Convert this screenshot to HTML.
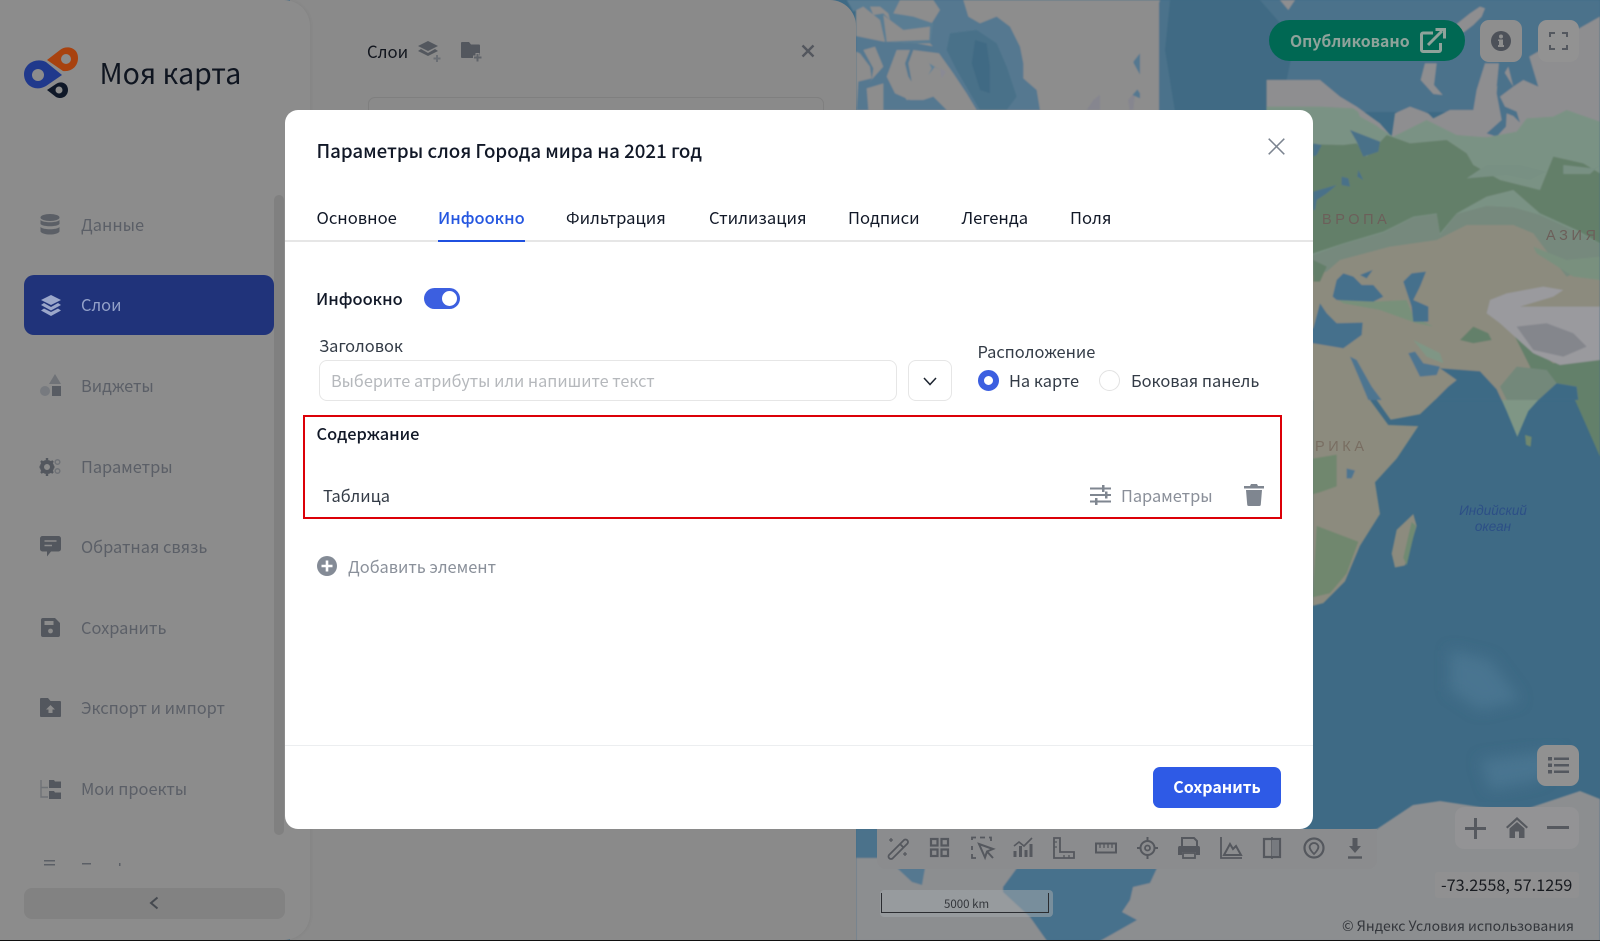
<!DOCTYPE html>
<html lang="ru">
<head>
<meta charset="utf-8">
<title>Моя карта</title>
<style>
html,body{margin:0;padding:0;width:1600px;height:941px;overflow:hidden;background:#3e6a85}
body{position:relative;font-family:"Noto Sans CJK SC","Liberation Sans",sans-serif;color:#0f1520}
.t{position:absolute;white-space:nowrap;line-height:24px;height:24px;font-size:16.4px}
svg{position:absolute;overflow:visible}
#map{left:0;top:0}
#side{position:absolute;left:0;top:0;width:310px;height:940px;background:#8c8c8c;border-radius:0 26px 26px 0;box-shadow:1px 0 3px rgba(0,0,0,.05)}
#layers{position:absolute;left:290px;top:0;width:566px;height:940px;background:#8a8a8a;border-radius:0 26px 0 0}
.nav{color:#5b5f67}
.active{position:absolute;left:24px;top:275px;width:250px;height:60px;background:#20337a;border-radius:10px}
.scroll{position:absolute;left:274px;top:195px;width:10px;height:640px;background:#808080;border-radius:5px}
.collapse{position:absolute;left:24px;top:888px;width:261px;height:31px;background:#828282;border-radius:8px}
.search{position:absolute;left:368px;top:97px;width:456px;height:30px;border:1px solid #7f7f7f;border-radius:7px;box-sizing:border-box}
#modal{position:absolute;left:285px;top:110px;width:1028px;height:719px;background:#fff;border-radius:13px}
.tabline{position:absolute;left:285px;top:240px;width:1028px;height:2px;background:#e6e6e6}
.under{position:absolute;left:438px;top:240px;width:87px;height:2px;background:#1f50e0}
.tab{color:#111827;font-size:16.6px}
.toggle{position:absolute;left:424px;top:288px;width:36px;height:21px;background:#3c5fe0;border-radius:11px}
.toggle i{position:absolute;left:18px;top:3px;width:15px;height:15px;background:#fff;border-radius:50%}
.input{position:absolute;left:319px;top:360px;width:578px;height:41px;border:1px solid #e6e6e6;border-radius:8px;box-sizing:border-box}
.dd{position:absolute;left:908px;top:360px;width:44px;height:41px;border:1px solid #e6e6e6;border-radius:8px;box-sizing:border-box}
.r1{position:absolute;left:977.5px;top:370px;width:21px;height:21px;border-radius:50%;border:6px solid #3c5fe0;box-sizing:border-box;background:#fff}
.r2{position:absolute;left:1099px;top:370px;width:21px;height:21px;border-radius:50%;border:1px solid #e2e2e2;box-sizing:border-box;background:#fff}
.red{position:absolute;left:303px;top:415px;width:979px;height:104px;border:2px solid #dc0008;box-sizing:border-box}
.div{position:absolute;left:285px;top:745px;width:1028px;height:1px;background:#eceef0}
.save{position:absolute;left:1153px;top:767px;width:128px;height:41px;background:#2e5ae6;border-radius:7px;color:#fff;font-size:16px;font-weight:700;text-align:center;line-height:39px}
.pill{position:absolute;left:1269px;top:20px;width:196px;height:41px;background:#006853;border-radius:21px}
.btn{position:absolute;background:#8e8e8e;border-radius:9px}
.bar{position:absolute;left:877px;top:829px;width:500px;height:40px;background:#8b8c8e;border-radius:0 0 9px 9px}
.coords{position:absolute;left:1435px;top:872px;width:144px;height:26px;background:#909091;border-radius:3px}
.scale{position:absolute;left:880px;top:890px;width:173px;height:27px;background:rgba(160,165,170,.55);border-radius:4px}
.scale i{position:absolute;left:1px;top:3px;width:168px;height:20px;border:1px solid #2a2c30;border-top:0;box-sizing:border-box;border-width:0 1.5px 1.5px 1.5px}
</style>
</head>
<body>

<svg id="map" width="1600" height="941" viewBox="0 0 1600 941">
  <defs>
    <filter id="soft" x="-2%" y="-2%" width="104%" height="104%"><feGaussianBlur stdDeviation=".8"/></filter>
    <filter id="wide" x="-30%" y="-30%" width="160%" height="160%"><feGaussianBlur stdDeviation="7"/></filter>
  </defs>
  <rect width="1600" height="941" fill="#3e6a85"/>
  <g filter="url(#soft)">
  <!-- Top strip left: Canadian arctic and Greenland -->
  <rect x="856" y="0" width="320" height="112" fill="#8d8d8d"/>
  <g transform="translate(840,0) scale(.3333)">
    <path d="M280 0H370L385 50 420 70 470 50 510 80 540 140 550 190 550 235 590 270 600 330H410L380 280 340 220 290 150 270 130 275 70 300 30Z" fill="#547890"/>
    <path d="M330 100 410 90 470 130 500 200 530 290 500 330H420L385 270 350 210 320 150Z" fill="#4a7189"/>
    <path d="M405 120 440 130 450 200 450 280 420 270 395 190Z" fill="#3f6a84"/>
    <path d="M20 0H180L160 40 220 50 280 70 272 130 230 130 135 125 120 60 70 20 40 35Z" fill="#5a7d93"/>
    <path d="M90 20 120 20 145 40 150 60 130 40 100 45ZM85 95 110 85 118 120 85 115ZM130 45 190 90 270 80 268 120 140 125Z" fill="#8d8d8d"/>
    <path d="M48 108 130 125 230 130 285 140 300 160 220 150 205 190 215 245 205 230 195 190 210 150 170 150 140 230 165 280 210 300 250 300 280 290 320 330H50L55 245 95 235 90 200 60 160 48 155Z" fill="#547890"/>
    <path d="M85 250 130 200 105 140 70 150 100 205 95 240ZM80 265 130 250 130 330 85 330ZM170 250 200 300 240 295 150 240Z" fill="#8d8d8d"/>
    <path d="M258 170 275 205 265 225 285 200 300 210 268 190Z" fill="#5f8298"/>
    <path d="M300 205 318 215 305 235Z" fill="#8a8a94"/>
    <path d="M860 45 885 50 880 120 840 150 830 190 800 220 790 240 810 260 760 300 740 330H880L900 140 885 100Z" fill="#86868f"/>
    <path d="M885 165 900 160 900 225 880 190ZM845 270 880 250 900 280 900 295Z" fill="#547890"/>
  </g>
  <!-- Greenland east + arctic ocean -->
  <rect x="1159" y="0" width="441" height="112" fill="#4c728b"/>
  <path d="M1140 0H1160L1152 25 1154 36 1133 62 1144 82 1128 100 1130 112H1100V0Z" fill="#8d8d8d"/>
  <path d="M1170 0H1260L1295 40 1280 112H1175L1165 50Z" fill="#3f6a84"/>
  <!-- Novaya Zemlya (zoom 12) -->
  <g transform="translate(1260,0) scale(.3333)" fill="#8e8e90">
    <path d="M590 72 630 40 660 20 675 25 665 50 640 75 610 98 585 95Z"/>
    <path d="M495 190H530L522 255 548 285 520 282 482 240Z"/>
    <path d="M60 0H105L85 30Z"/>
  </g>
  <!-- Eurasia (zoom 10 coords) -->
  <g transform="translate(1300,100) scale(.3333)">
    <path d="M-100 -60 60 -60 120 -10 170 20 240 70 275 110 285 40 330 20 385 40 400 55 450 30 520 30 530 -30 555 -110 597 -110 590 -40 625 -100 640 -40 670 -60 715 -40 688 -130 900 -250V900H-100Z" fill="#8e8e90"/>
    <path d="M597 -110 640 -40 600 -10 615 20 650 35 660 68 640 48 620 40 618 80 590 110 560 100 605 60 590 -20Z" fill="#4c728b"/>
    <path d="M-100 20 60 20 160 25 240 85 280 110 380 60 430 85 470 105 560 112 650 95 680 55 760 50 800 30 900 65V500H-100Z" fill="#7a9284"/>
    <path d="M170 25 240 70 232 78 180 50Z" fill="#8e8e90"/>
    <path d="M-100 130 130 135 170 130 200 170 260 105 330 130 440 120 500 160 520 195 600 240 720 270 760 170 850 190 900 220V430L830 390 720 340 640 270 560 290 470 340 420 400 410 340 340 350 250 395 130 430 40 460 -100 460Z" fill="#647f69"/>
    <path d="M500 235 560 195 660 195 740 215 690 240 620 225Z" fill="#789083"/>
    <path d="M790 195 880 205 900 195 870 222 790 222Z" fill="#789083"/>
    <path d="M-100 480 40 465 130 432 250 398 340 352 410 342 420 405 470 342 560 318 640 322 720 345 830 395 900 432V900H-100Z" fill="#76897d"/>
    <path d="M-100 560 80 515 120 480 270 440 410 420 500 375 640 375 700 400 760 480 800 530 900 490V900H-100Z" fill="#8c8b7e"/>
    <path d="M40 480 80 500 60 545 40 545Z" fill="#647f69"/>
    <path d="M700 440 800 480 900 470 900 540 820 530 710 460Z" fill="#79907e"/>
    <path d="M100 590 230 605 320 600 340 650 400 680 350 670 240 630 130 610Z" fill="#78907a"/>
    <path d="M480 720 520 680 565 700 575 720 520 730Z" fill="#64806a"/>
    <path d="M340 720 420 760 430 790 380 770Z" fill="#7f9685"/>
    <path d="M640 700 760 790 900 770V900H835L830 860 770 850 715 900 690 800Z" fill="#64806a"/>
    <path d="M600 860 650 800 740 810 770 850 715 900H620Z" fill="#73887a"/>
    <path d="M570 600 620 580 730 560 790 570 760 590 660 620 900 620V780L780 795 700 760 600 670 560 640Z" fill="#9a9a9e"/>
    <path d="M650 680 740 670 820 700 860 740 790 770 700 750Z" fill="#84868c"/>
    <path d="M98 590 110 540 130 520 160 530 185 555 220 555 250 590 220 605 110 600Z" fill="#44708c"/>
    <path d="M180 525 218 510 200 535Z" fill="#44708c"/>
    <path d="M310 545 335 520 378 515 360 560 340 600 385 620 385 665 340 665 335 620 325 590Z" fill="#44708c"/>
    <path d="M-100 690 40 685 60 610 80 640 110 670 188 668 185 705 130 745 40 730 -100 700Z" fill="#44708c"/>
    <path d="M150 770 170 780 215 860 245 900H205L180 840Z" fill="#4d7590"/>
    <path d="M325 760 345 755 370 790 420 800 410 825 360 830 340 790Z" fill="#4d7590"/>
    <path d="M420 805 540 814 590 868 605 900H405L445 860 470 840Z" fill="#3e6a85"/>
    <path d="M715 900 770 850 830 860 835 900Z" fill="#3e6a85"/>
    <path d="M40 130 65 135 50 165 40 170ZM40 275 110 255 80 280 50 300 45 330 40 330ZM125 230 145 235 150 260 125 255ZM175 210 190 240 172 230Z" fill="#4a7189"/>
    <path d="M150 90 240 125 235 155 190 170 170 125Z" fill="#4a7189"/>
  </g>
  <!-- Lower land (zoom 4 coords) -->
  <g transform="translate(1280,320) scale(.3333,.396)">
    <path d="M98 202H270L325 265 415 268 350 350 285 410 300 490 240 570 195 660 130 715 98 722Z" fill="#8c8b7e"/>
    <path d="M290 202H465L420 238 332 252Z" fill="#8c8b7e"/>
    <path d="M665 202H775L745 230 712 295 680 230Z" fill="#7f9685"/>
    <path d="M885 202H960V345L905 240Z" fill="#64806a"/>
    <path d="M98 350 170 340 170 420 120 435 98 440ZM110 520 235 560 200 640 150 690 98 700Z" fill="#70876e"/>
    <path d="M200 375 225 380 215 400 200 400Z" fill="#4d7590"/>
    <path d="M335 590 350 530 400 490 410 520 375 620 345 625Z" fill="#8c8b7e"/>
    <path d="M370 600 395 510 408 520 380 620Z" fill="#6f8a72"/>
    <path d="M735 290 755 295 752 320 738 315Z" fill="#70876e"/>
  </g>
  <!-- Antarctica -->
  <path d="M856 941V858H1157L1377 829 1413 805 1440 801 1480 807 1520 811 1580 791 1600 799V941Z" fill="#8c8e90"/>
  <path d="M1003 887 1017 868H1157L1150 883 1133 887 1130 900 1122 912 1137 920 1100 941H1047L1030 917 1003 892Z" fill="#46718c"/>
  <path d="M897 868H925L922 885 912 882Z" fill="#547890"/>
  <path d="M856 829H880V858H856Z" fill="#4c728b"/>
  </g>
  <!-- Ocean shading -->
  <path d="M1450 650 1490 660 1520 700 1480 710 1450 690Z" fill="#4a7590" filter="url(#wide)"/>
  <path d="M1480 760 1560 750 1540 780 1490 790Z" fill="#4a7590" filter="url(#wide)"/>
  <text x="1322" y="224" font-family="Liberation Sans,sans-serif" font-size="14.5" letter-spacing="3.6" fill="#6c5f5a">ВРОПА</text>
  <text x="1546" y="240" font-family="Liberation Sans,sans-serif" font-size="14.5" letter-spacing="3.6" fill="#6c5f5a">АЗИЯ</text>
  <text x="1315" y="451" font-family="Liberation Sans,sans-serif" font-size="14.5" letter-spacing="3.6" fill="#796e62">РИКА</text>
  <text x="1493" y="515" text-anchor="middle" font-family="Liberation Sans,sans-serif" font-style="italic" font-size="13.5" fill="#2c4f86">Индийский</text>
  <text x="1493" y="531" text-anchor="middle" font-family="Liberation Sans,sans-serif" font-style="italic" font-size="13.5" fill="#2c4f86">океан</text>
</svg>

<div id="layers"></div>
<div id="side"></div>
<div class="scroll"></div>
<div class="active"></div>
<div class="collapse"></div>

<!-- Logo -->
<svg style="left:20px;top:44px" width="62" height="58" viewBox="20 44 62 58">
  <path d="M47 60 60 50C66 45 78 47 78 58 78 66 72 72 63 71Z" fill="#a8420f"/>
  <circle cx="66" cy="59" r="5" fill="#8c8c8c"/>
  <path d="M62 75 46 86C36 92 24 86 24 74 24 64 36 57 46 62Z" fill="#20398c"/>
  <circle cx="38" cy="75" r="6" fill="#8c8c8c"/>
  <path d="M47 90 56 84C62 80 68 84 68 90 68 96 62 100 56 97Z" fill="#0f1828"/>
  <circle cx="59" cy="90" r="3.5" fill="#8c8c8c"/>
</svg>
<div class="t" style="left:99.500px;top:59px;font-size:28.500px;color:#0f1520;line-height:28px;height:28px">Моя карта</div>

<!-- Sidebar icons -->
<svg style="left:40px;top:214px" width="21" height="21" viewBox="0 0 21 21" fill="#5b5f66">
  <ellipse cx="10" cy="3.5" rx="9.5" ry="3.5"/><path d="M.5 6C3 9 17 9 19.5 6V10C17 13 3 13 .5 10ZM.5 13C3 16 17 16 19.5 13V17.5C17 21.5 3 21.5 .5 17.5Z"/>
</svg>
<svg style="left:40px;top:295px" width="22" height="21" viewBox="0 0 22 21" fill="#9ba7ca">
  <path d="M11 0 21 5 11 10 1 5Z"/><path d="M4 8 11 12 18 8 21 10 11 15.5 1 10Z"/><path d="M4 13.5 11 17 18 13.5 21 15.5 11 21 1 15.5Z"/>
</svg>
<svg style="left:40px;top:374px" width="21" height="23" viewBox="0 0 21 23">
  <path d="M15 0 21 10H9Z" fill="#6f7277"/><circle cx="5" cy="17" r="5" fill="#777a7f"/><rect x="12" y="12" width="9" height="10" fill="#585c63"/>
</svg>
<svg style="left:40px;top:457px" width="21" height="20" viewBox="0 0 21 20">
  <circle cx="7" cy="10" r="5" fill="none" stroke="#53575e" stroke-width="4"/>
  <path d="M7 1V3M7 17V19M1 4 3 6M11 14 13 16M13 4 11 6M1 16 3 14M-.5 10H1.5M12.5 10H14.5" stroke="#53575e" stroke-width="2.4"/>
  <circle cx="17.5" cy="5" r="2.3" fill="none" stroke="#6f7277" stroke-width="1.5"/><circle cx="17.5" cy="14" r="2.3" fill="none" stroke="#6f7277" stroke-width="1.5"/>
</svg>
<svg style="left:40px;top:536px" width="21" height="21" viewBox="0 0 21 21">
  <path d="M2.5 0H18.5A2.5 2.5 0 0 1 21 2.5V13A2.5 2.5 0 0 1 18.5 15.5H11L7 20.5V15.5H2.5A2.5 2.5 0 0 1 0 13V2.5A2.5 2.5 0 0 1 2.5 0Z" fill="#53575e"/>
  <path d="M4.5 5H16.5M4.5 9.5H12" stroke="#8c8c8c" stroke-width="1.6"/>
</svg>
<svg style="left:41px;top:618px" width="19" height="19" viewBox="0 0 19 19">
  <path d="M2 0H14L19 5V17A2 2 0 0 1 17 19H2A2 2 0 0 1 0 17V2A2 2 0 0 1 2 0Z" fill="#53575e"/>
  <rect x="3.5" y="3" width="9" height="4" fill="#8c8c8c"/><circle cx="9.5" cy="13" r="2.4" fill="#8c8c8c"/>
</svg>
<svg style="left:40px;top:698px" width="21" height="19" viewBox="0 0 21 19">
  <path d="M1 0H8L10.5 3H20A1 1 0 0 1 21 4V18A1 1 0 0 1 20 19H1A1 1 0 0 1 0 18V1A1 1 0 0 1 1 0Z" fill="#53575e"/>
  <path d="M10.5 7 15 11.5H12.5V15H8.500V11.500H6Z" fill="#8c8c8c"/>
</svg>
<svg style="left:40px;top:780px" width="21" height="19" viewBox="0 0 21 19">
  <path d="M1 0V17H8M1 7.500H8" fill="none" stroke="#6f7277" stroke-width="1.400"/>
  <path d="M9 0H14L15 1.500H21V8H9ZM9 11H14L15 12.500H21V19H9Z" fill="#53575e"/>
</svg>
<svg style="left:44px;top:860px" width="12" height="6"><rect width="11" height="1.500" y="0" fill="#5b5f66"/><rect width="11" height="1.500" y="4" fill="#5b5f66"/></svg>
<svg style="left:82px;top:863px" width="42" height="3"><rect width="9" height="1.500" y="0" fill="#5b5f66"/><rect width="1.500" height="3" x="37" fill="#5b5f66"/></svg>
<svg style="left:148px;top:896px" width="12" height="14" viewBox="0 0 12 14"><path d="M9.500 1.500 3 7 9.500 12.500" fill="none" stroke="#45494f" stroke-width="2"/></svg>

<div class="t nav" style="left:81px;top:212px">Данные</div>
<div class="t nav" style="left:81px;top:292px;color:#93a1c9">Слои</div>
<div class="t nav" style="left:81px;top:373px">Виджеты</div>
<div class="t nav" style="left:81px;top:453.500px">Параметры</div>
<div class="t nav" style="left:81px;top:534px">Обратная связь</div>
<div class="t nav" style="left:81px;top:615px">Сохранить</div>
<div class="t nav" style="left:81px;top:695px">Экспорт и импорт</div>
<div class="t nav" style="left:81px;top:776px">Мои проекты</div>

<!-- Layers panel head -->
<div class="t" style="left:367px;top:38.500px;color:#11151d;font-size:16.700px">Слои</div>
<svg style="left:417px;top:41px" width="26" height="21" viewBox="0 0 26 21" fill="#53575e">
  <path d="M11 0 21 5 11 10 1 5Z"/><path d="M4 8 11 12 18 8 21 10 11 15 1 10Z"/>
  <path d="M20 14V21M16.500 17.500H23.500" stroke="#6a6e74" stroke-width="2" fill="none"/>
</svg>
<svg style="left:461px;top:42px" width="24" height="20" viewBox="0 0 24 20">
  <path d="M1 0H8L10 2.500H18A1 1 0 0 1 19 3.500V16H1A1 1 0 0 1 0 15V1A1 1 0 0 1 1 0Z" fill="#53575e"/>
  <path d="M16.500 11V20M12 15.500H21" stroke="#8a8a8a" stroke-width="4"/><path d="M16.500 12V19.500M13 15.500H20.500" stroke="#60646a" stroke-width="2"/>
</svg>
<svg style="left:801px;top:44px" width="14" height="14" viewBox="0 0 14 14"><path d="M1.500 1.500 12.500 12.500M12.500 1.500 1.500 12.500" stroke="#53575e" stroke-width="2.400"/></svg>
<div class="search"></div>

<!-- Map buttons -->
<div class="pill"></div>
<div class="t" style="left:1290px;top:29px;color:#8fa39b;font-weight:700;font-size:15.800px">Опубликовано</div>
<svg style="left:1420px;top:28px" width="26" height="25" viewBox="0 0 26 25" fill="none" stroke="#8fa39b" stroke-width="3">
  <path d="M13 5H3A1.500 1.500 0 0 0 1.500 6.500V22A1.500 1.500 0 0 0 3 23.500H19A1.500 1.500 0 0 0 20.500 22V15"/>
  <path d="M8 17 22 3"/><path d="M15.500 1.500H24.500V10.500"/>
</svg>
<div class="btn" style="left:1480px;top:20px;width:42px;height:42px"></div>
<svg style="left:1491px;top:31px" width="20" height="20" viewBox="0 0 20 20"><circle cx="10" cy="10" r="10" fill="#4d5159"/><rect x="8" y="8.500" width="4" height="7" fill="#8e8e8e"/><rect x="7" y="14" width="6" height="2" fill="#8e8e8e"/><rect x="7" y="8.500" width="4" height="1.500" fill="#8e8e8e"/><circle cx="10" cy="5.500" r="2" fill="#8e8e8e"/></svg>
<div class="btn" style="left:1538px;top:20px;width:41px;height:42px;background:#929292"></div>
<svg style="left:1549px;top:32px" width="19" height="18" viewBox="0 0 19 18" fill="none" stroke="#54585f" stroke-width="2"><path d="M1 5V1H6M13 1H18V5M18 13V17H13M6 17H1V13"/></svg>

<div class="btn" style="left:1537px;top:745px;width:42px;height:41px;background:#919191"></div>
<svg style="left:1548px;top:757px" width="21" height="17" viewBox="0 0 21 17"><g fill="#54585f"><rect y="0" width="4" height="3.500"/><rect y="6.500" width="4" height="3.500"/><rect y="13" width="4" height="3.500"/><rect x="6" y=".5" width="15" height="2.500"/><rect x="6" y="7" width="15" height="2.500"/><rect x="6" y="13.500" width="15" height="2.500"/></g></svg>
<div class="btn" style="left:1455px;top:807px;width:124px;height:42px;background:#939395"></div>
<svg style="left:1465px;top:818px" width="21" height="21" viewBox="0 0 21 21"><path d="M10.500 0V21M0 10.500H21" stroke="#56595f" stroke-width="3"/></svg>
<svg style="left:1506px;top:817px" width="22" height="21" viewBox="0 0 22 21" fill="#56595f"><path d="M11 0 22 10 20.500 11.500 11 3 1.500 11.500 0 10Z"/><path d="M3.500 11.500 11 5 18.500 11.500V21H13V14.500H9V21H3.500Z"/></svg>
<svg style="left:1547px;top:826px" width="22" height="4"><rect width="22" height="3" fill="#56595f"/></svg>

<div class="coords"></div>
<div class="t" style="left:1441px;top:872px;font-size:16.300px;color:#181b20">-73.2558, 57.1259</div>
<div class="t" style="left:1342px;top:914px;font-size:14px;color:#33363b">© Яндекс Условия использования</div>

<!-- Bottom tool bar -->
<div class="bar"></div>
<svg style="left:877px;top:829px" width="500" height="40" viewBox="877 829 500 40" fill="none" stroke="#55585e" stroke-width="1.800">
  <path d="M889 855 904 840a2.500 2.500 0 0 1 3.500 3.500L892.500 858.500a2.500 2.500 0 0 1-3.500-3.500ZM900 844 903.500 847.500"/>
  <path d="M891 838V842M889 840H893M905 852V856M903 854H907" stroke-width="1.300"/>
  <g fill="none" stroke-width="2.200"><rect x="931" y="839" width="6.500" height="6.500"/><rect x="941.500" y="839" width="6.500" height="6.500"/><rect x="931" y="849.500" width="6.500" height="6.500"/><rect x="941.500" y="849.500" width="6.500" height="6.500"/></g>
  <path d="M972 840V837.500H976M980 837.500H985M989 837.500H991V841M972 846V850M972 854V858H976"/>
  <path d="M979 844 993 849 987 851.500 985 857.500ZM987 851.500 993 858" stroke-width="2"/>
  <path d="M1014 846 1019 842 1024 846 1032 838" stroke-width="1.600"/>
  <path d="M1015 857V851M1020.500 857V846M1026 857V850M1031 857V844" stroke-width="3"/>
  <path d="M1054 838H1060V852H1074V858H1054Z"/><path d="M1054 842H1057M1054 847H1057M1064 858V855M1069 858V855" stroke-width="1.300"/>
  <rect x="1096" y="843.500" width="20" height="9" stroke-width="2"/><path d="M1100 844V848M1104 844V848M1108 844V848M1112 844V848" stroke-width="1.300"/>
  <circle cx="1147.500" cy="848" r="7" stroke-width="2"/><circle cx="1147.500" cy="848" r="2.500" stroke-width="1.800"/><path d="M1147.500 837V840M1147.500 856V859M1137 848H1140M1155 848H1158" stroke-width="2"/>
  <path d="M1182 846V838H1194L1197 841V846" stroke-width="2"/>
  <path d="M1179 846H1199A2 2 0 0 1 1200 848V855H1196V852H1182V855H1178V848A2 2 0 0 1 1179 846Z" fill="#55585e" stroke="none"/>
  <rect x="1183" y="853" width="12" height="5" stroke-width="1.800"/>
  <path d="M1221 837V858H1242" stroke-width="1.800"/><path d="M1224 855 1230 844 1233 849 1236 846 1241 855Z" stroke-width="2"/>
  <path d="M1264 839H1280V857H1264Z" stroke-width="2.200"/><path d="M1272 837V859" stroke-width="1.500"/><path d="M1272 840H1279V856H1272Z" fill="#777a7f" stroke="none"/>
  <circle cx="1314" cy="848" r="9.500" stroke-width="2.200"/><path d="M1314 854C1310 850 1309 847 1310 845.500A4.500 4.500 0 0 1 1318 845.500C1319 847 1318 850 1314 854Z" stroke-width="1.800"/>
  <path d="M1355 838V848" stroke-width="5"/><path d="M1349 846H1361L1355 853Z" fill="#55585e" stroke="none"/><path d="M1348 857.500H1362" stroke-width="2.400"/>
</svg>

<!-- Scale -->
<div class="scale"><i></i></div>
<div class="t" style="left:944px;top:892px;font-size:11.500px;color:#33363b">5000 km</div>

<!-- Modal -->
<div id="modal"></div>
<div class="t" style="left:316.500px;top:139px;font-size:18.700px;color:#111827;font-weight:500">Параметры слоя Города мира на 2021 год</div>
<svg style="left:1268px;top:138px" width="17" height="17" viewBox="0 0 17 17"><path d="M.7.7 16.300 16.300M16.300.7.7 16.300" stroke="#7c8490" stroke-width="1.500"/></svg>

<div class="t tab" style="left:316.500px;top:205px">Основное</div>
<div class="t tab" style="left:438px;top:205px;color:#2456e0;font-weight:500;font-size:16.400px">Инфоокно</div>
<div class="t tab" style="left:566px;top:205px">Фильтрация</div>
<div class="t tab" style="left:709px;top:205px">Стилизация</div>
<div class="t tab" style="left:848px;top:205px">Подписи</div>
<div class="t tab" style="left:961.500px;top:205px">Легенда</div>
<div class="t tab" style="left:1070px;top:205px">Поля</div>
<div class="tabline"></div>
<div class="under"></div>

<div class="t tab" style="left:316px;top:286px;font-weight:500;font-size:16.400px">Инфоокно</div>
<div class="toggle"><i></i></div>

<div class="t" style="left:319px;top:333px;color:#333b46">Заголовок</div>
<div class="input"></div>
<div class="t" style="left:331px;top:368px;color:#b5b8bc;font-size:16.270px">Выберите атрибуты или напишите текст</div>
<div class="dd"></div>
<svg style="left:923px;top:377px" width="14" height="9" viewBox="0 0 14 9"><path d="M1 1 7 7.500 13 1" fill="none" stroke="#1c2430" stroke-width="1.500"/></svg>
<div class="t" style="left:977.500px;top:339px;color:#333b46">Расположение</div>
<div class="r1"></div>
<div class="t" style="left:1009px;top:368px;color:#333b46">На карте</div>
<div class="r2"></div>
<div class="t" style="left:1131px;top:368px;color:#333b46">Боковая панель</div>

<div class="red"></div>
<div class="t tab" style="left:316.500px;top:421px;font-weight:500;font-size:16.400px">Содержание</div>
<div class="t" style="left:323px;top:482.500px;color:#333b46">Таблица</div>
<svg style="left:1090px;top:485px" width="21" height="20" viewBox="0 0 21 20" fill="#7f8690">
  <rect y="2.500" width="21" height="2"/><rect y="9" width="21" height="2"/><rect y="15.500" width="21" height="2"/>
  <rect x="12" y="0" width="2.500" height="7"/><rect x="15" y="6.500" width="2.500" height="7"/><rect x="5" y="13" width="2.500" height="7"/>
</svg>
<div class="t" style="left:1121px;top:482.500px;color:#8a8f99">Параметры</div>
<svg style="left:1244px;top:484px" width="20" height="22" viewBox="0 0 20 22" fill="#7f8690">
  <path d="M7 0H13L14 2H20V4.500H0V2H6Z"/><path d="M2 6H18L16.800 20.500A1.500 1.500 0 0 1 15.300 22H4.700A1.500 1.500 0 0 1 3.200 20.500Z"/>
</svg>

<svg style="left:317px;top:556px" width="20" height="20" viewBox="0 0 20 20"><circle cx="10" cy="10" r="10" fill="#848b96"/><path d="M10 4.500V15.500M4.500 10H15.500" stroke="#fff" stroke-width="2.600"/></svg>
<div class="t" style="left:348px;top:554px;color:#8a909a">Добавить элемент</div>

<div class="div"></div>
<div class="save">Сохранить</div>

<div style="position:absolute;left:0;top:940px;width:1600px;height:1px;background:#111"></div>
</body>
</html>
